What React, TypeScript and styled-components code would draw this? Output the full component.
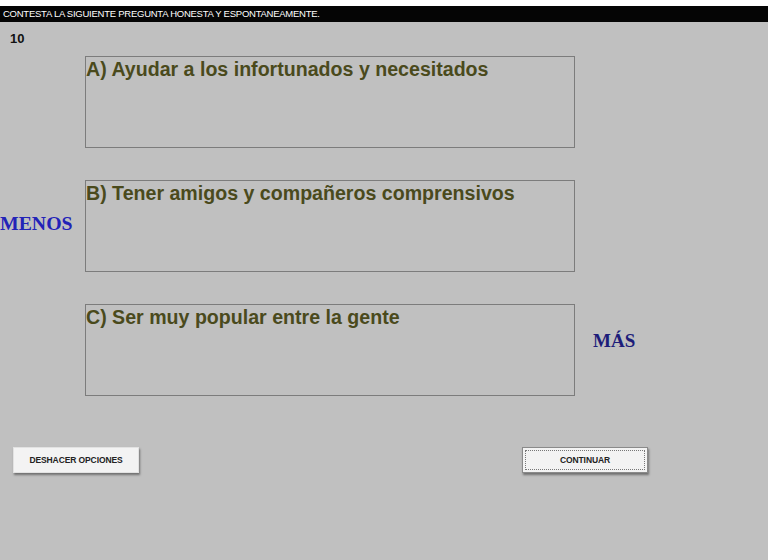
import React from 'react';
import styled, { createGlobalStyle } from 'styled-components';

const GlobalStyle = createGlobalStyle`
  html, body {
    margin: 0;
    padding: 0;
    background: #c0c0c0;
  }
  body {
    font-family: "Liberation Sans", Arial, sans-serif;
  }
`;

const Page = styled.div`
  width: 768px;
  height: 560px;
  background: #c0c0c0;
  overflow: hidden;
`;

const TopStrip = styled.div`
  height: 6px;
  background: #ffffff;
`;

const TitleBar = styled.div`
  height: 16px;
  background: #050505;
  color: #ffffff;
  font-size: 9.5px;
  letter-spacing: -0.25px;
  line-height: 16px;
  padding-left: 3px;
  white-space: nowrap;
`;

const QuestionNumber = styled.div`
  padding: 9px 0 0 10px;
  height: 16px;
  font-size: 13px;
  font-weight: 700;
  color: #111;
  line-height: 15px;
`;

const OptionsGrid = styled.div`
  margin-top: 9px;
  display: grid;
  grid-template-columns: 85px 490px 1fr;
  grid-auto-rows: 92px;
  row-gap: 32px;
`;

const OptionBox = styled.div<{ $row: number }>`
  grid-column: 2;
  grid-row: ${p => p.$row};
  border: 1px solid #7c7c7c;
  padding: 0 0 0 0;
  font-size: 19.6px;
  font-weight: 700;
  color: #4a4a1c;
  line-height: 25px;
  box-sizing: border-box;
`;

const SideLabel = styled.div<{ $col: number; $row: number; $color: string; $size: number; $top: number }>`
  grid-column: ${p => p.$col};
  grid-row: ${p => p.$row};
  align-self: start;
  margin-top: ${p => p.$top}px;
  padding-left: ${p => (p.$col === 3 ? 18 : 0)}px;
  font-family: "Liberation Serif", "Times New Roman", serif;
  font-weight: 700;
  font-size: ${p => p.$size}px;
  color: ${p => p.$color};
  line-height: 22px;
`;

const ButtonRow = styled.div`
  margin-top: 51px;
  display: flex;
  padding-left: 13px;
`;

const Button = styled.button<{ $focused?: boolean }>`
  width: 126px;
  height: 26px;
  margin-left: ${p => (p.$focused ? 383 : 0)}px;
  background: #f3f3f3;
  border: 1px solid ${p => (p.$focused ? '#8a8a8a' : '#e2e2e2')};
  outline: ${p => (p.$focused ? '1px dotted #777' : 'none')};
  outline-offset: -4px;
  box-shadow: 1px 2px 2px rgba(60, 60, 60, 0.6);
  font-family: "Liberation Sans", Arial, sans-serif;
  font-size: 8.5px;
  font-weight: 700;
  color: #222;
  letter-spacing: -0.1px;
  padding: 0;
  cursor: pointer;
`;

const options = [
  'A) Ayudar a los infortunados y necesitados',
  'B) Tener amigos y compañeros comprensivos',
  'C) Ser muy popular entre la gente',
];

export default function App() {
  return (
    <Page>
      <GlobalStyle />
      <TopStrip />
      <TitleBar>CONTESTA LA SIGUIENTE PREGUNTA HONESTA Y ESPONTANEAMENTE.</TitleBar>
      <QuestionNumber>10</QuestionNumber>
      <OptionsGrid>
        {options.map((text, i) => (
          <OptionBox key={text} $row={i + 1}>{text}</OptionBox>
        ))}
        <SideLabel $col={1} $row={2} $color="#2323b8" $size={19.8} $top={32}>MENOS</SideLabel>
        <SideLabel $col={3} $row={3} $color="#1d1d7a" $size={19} $top={26}>MÁS</SideLabel>
      </OptionsGrid>
      <ButtonRow>
        <Button>DESHACER OPCIONES</Button>
        <Button $focused>CONTINUAR</Button>
      </ButtonRow>
    </Page>
  );
}
